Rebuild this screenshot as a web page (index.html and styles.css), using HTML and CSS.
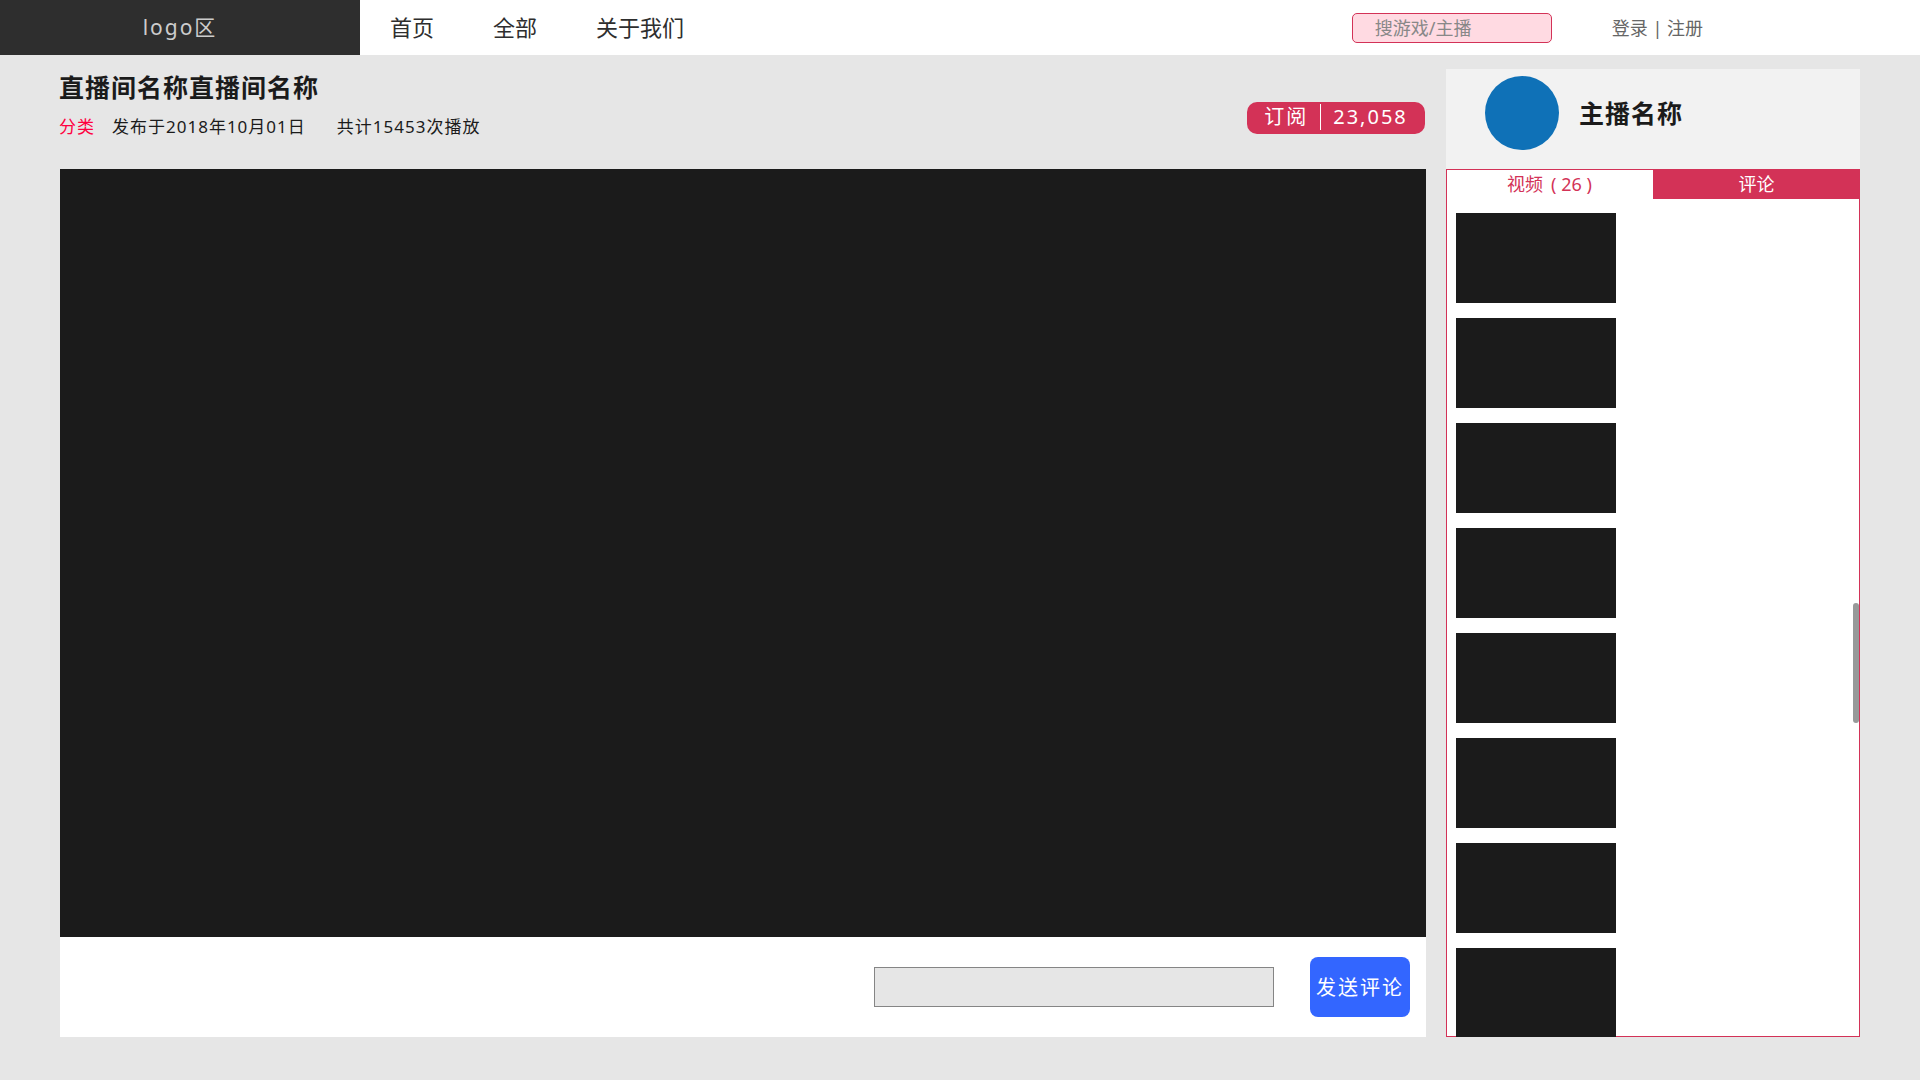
FILE: index.html
```html
<!DOCTYPE html>
<html lang="zh-CN">
<head>
<meta charset="utf-8">
<meta name="viewport" content="width=device-width, initial-scale=1">
<title>直播间名称</title>
<link rel="stylesheet" href="styles.css">
</head>
<body>
<header class="topbar">
  <a class="logo" href="#">logo区</a>
  <nav class="nav">
    <a href="#">首页</a>
    <a href="#">全部</a>
    <a href="#">关于我们</a>
  </nav>
  <input class="search" type="search" placeholder="搜游戏/主播" aria-label="搜游戏/主播">
  <div class="account"><a href="#">登录</a> | <a href="#">注册</a></div>
</header>
<main class="page">
  <section class="room">
    <div class="room-info">
      <h1 class="room-title">直播间名称直播间名称</h1>
      <div class="meta">
        <a class="category" href="#">分类</a>
        <span class="published">发布于2018年10月01日</span>
        <span>共计15453次播放</span>
      </div>
    </div>
    <button class="subscribe" type="button">
      <span>订阅</span>
      <span class="count">23,058</span>
    </button>
  </section>
  <section class="host">
    <div class="avatar"></div>
    <h2 class="host-name">主播名称</h2>
  </section>
  <section class="stage">
    <div class="player"></div>
    <form class="comment-form">
      <input class="comment-input" type="text" aria-label="评论">
      <button class="send" type="button">发送评论</button>
    </form>
  </section>
  <aside class="panel">
    <div class="tabs">
      <button class="tab" type="button">视频<span class="tab-count">( 26 )</span></button>
      <button class="tab tab-filled" type="button">评论</button>
    </div>
    <div class="videos">
      <a class="thumb" href="#" aria-label="视频 1"></a>
      <a class="thumb" href="#" aria-label="视频 2"></a>
      <a class="thumb" href="#" aria-label="视频 3"></a>
      <a class="thumb" href="#" aria-label="视频 4"></a>
      <a class="thumb" href="#" aria-label="视频 5"></a>
      <a class="thumb" href="#" aria-label="视频 6"></a>
      <a class="thumb" href="#" aria-label="视频 7"></a>
      <a class="thumb" href="#" aria-label="视频 8"></a>
    </div>
    <div class="scroll-thumb"></div>
  </aside>
</main>
</body>
</html>
```
FILE: styles.css
```css
:root {
  --accent: #d33257;
  --ink: #1b1b1b;
}

* {
  box-sizing: border-box;
}

body {
  margin: 0;
  background: #e6e6e6;
  color: var(--ink);
  font-family: "Noto Sans", "Noto Sans CJK SC", sans-serif;
  font-size: 18px;
}

a {
  color: inherit;
  text-decoration: none;
}

button,
input {
  font: inherit;
}

button {
  border: 0;
  padding: 0 0 2px;
  cursor: pointer;
}

h1,
h2 {
  margin: 0;
  font-size: 25px;
  line-height: 36px;
  letter-spacing: 1px;
}

/* Top bar */
.topbar {
  display: flex;
  align-items: center;
  height: 55px;
  padding-right: 217px;
  background: #fff;
}

.logo {
  flex: 0 0 360px;
  line-height: 55px;
  background: #2e2e2e;
  color: #ccc;
  font-size: 21px;
  letter-spacing: 2px;
  text-align: center;
}

.nav {
  display: flex;
  gap: 59px;
  margin-right: auto;
  padding: 0 0 4px 30px;
  color: #2e2e2e;
  font-size: 22px;
}

.search {
  width: 200px;
  height: 30px;
  margin-right: 60px;
  padding: 0 22px;
  border: 1px solid var(--accent);
  border-radius: 5px;
  background: #ffdae2;
}

.search::placeholder {
  color: #888;
  opacity: 1;
}

.account {
  padding-bottom: 2px;
  color: #666;
}

/* Page grid */
.page {
  display: grid;
  grid-template-columns: minmax(0, 1fr) 414px;
  grid-template-rows: 100px auto;
  column-gap: 20px;
  padding: 14px 60px 43px;
}

.room {
  display: flex;
  justify-content: space-between;
  align-items: center;
  padding-bottom: 2px;
}

.room-info {
  display: flex;
  flex-direction: column;
  gap: 4px;
  align-self: flex-start;
  margin-left: -1px;
}

.meta {
  display: flex;
  font-size: 17px;
  line-height: 36px;
  letter-spacing: 1px;
}

.category {
  margin-right: 17px;
  color: #ff0040;
}

.published {
  margin-right: 31px;
}

.subscribe {
  display: flex;
  justify-content: center;
  align-items: center;
  gap: 12px;
  width: 178px;
  height: 32px;
  margin-right: 1px;
  border-radius: 10px;
  background: var(--accent);
  color: #fff;
  font-size: 20px;
  line-height: 26px;
  letter-spacing: 2px;
}

.count {
  padding-left: 12px;
  border-left: 1px solid #fff;
}

.host {
  display: flex;
  align-items: center;
  gap: 20px;
  padding: 0 39px 12px;
  background: #f2f2f2;
}

.avatar {
  width: 74px;
  height: 74px;
  border-radius: 50%;
  background: #0f71b7;
}

/* Player and comment form */
.player {
  aspect-ratio: 1366 / 768;
  background: var(--ink);
}

.comment-form {
  display: flex;
  justify-content: flex-end;
  align-items: center;
  gap: 36px;
  height: 100px;
  padding-right: 16px;
  background: #fff;
}

.comment-input {
  width: 400px;
  height: 40px;
  padding: 0 10px;
  border: 1px solid #858585;
  background: #e6e6e6;
}

.send {
  width: 100px;
  height: 60px;
  border-radius: 8px;
  background: #3366ff;
  color: #fff;
  font-size: 20px;
  letter-spacing: 2px;
}

/* Side panel */
.panel {
  position: relative;
  display: flex;
  flex-direction: column;
  background: #fff;
  box-shadow: inset 0 0 0 1px var(--accent);
}

.tabs {
  display: flex;
  height: 30px;
}

.tab {
  flex: 1;
  background: none;
  color: var(--accent);
}

.tab-count {
  margin-left: 8px;
}

.tab-filled {
  background: var(--accent);
  color: #fff;
}

.videos {
  flex: 1;
  contain: size;
  display: flex;
  flex-direction: column;
  gap: 15px;
  padding: 14px 10px 0;
  overflow: hidden;
}

.thumb {
  flex: none;
  width: 160px;
  height: 90px;
  background: var(--ink);
}

.scroll-thumb {
  position: absolute;
  top: 50%;
  right: 1px;
  width: 6px;
  height: 120px;
  border-radius: 3px;
  background: #979999;
}
```
